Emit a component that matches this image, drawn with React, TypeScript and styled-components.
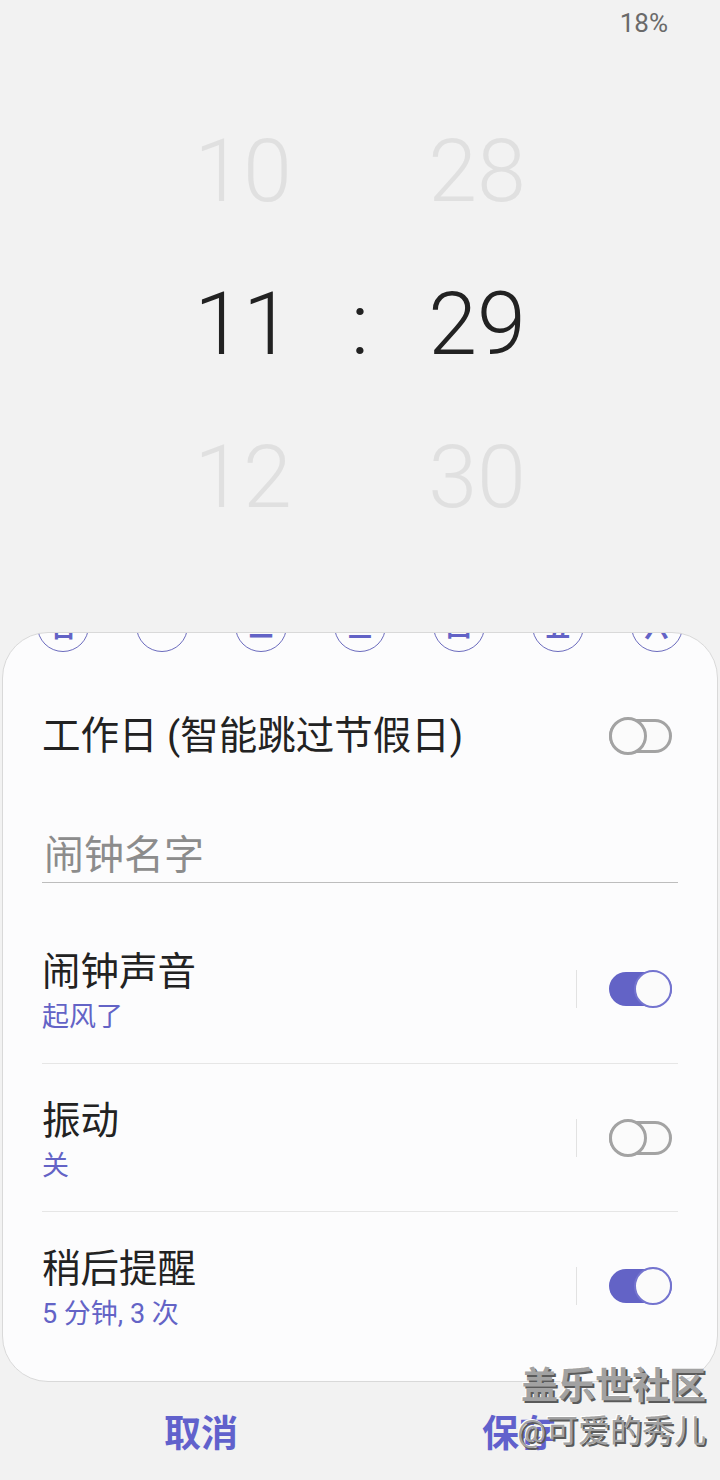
import React from "react";
import styled, { createGlobalStyle } from "styled-components";

const GlobalStyle = createGlobalStyle`
  html, body { margin: 0; padding: 0; background: #f2f2f2; }
  body { font-family: Roboto, "Noto Sans CJK SC", sans-serif; }
  * { box-sizing: border-box; }
`;

const ACCENT = "#6363c6";

const Screen = styled.div`
  width: 720px;
  height: 1480px;
  position: relative;
  background: #f2f2f2;
  overflow: hidden;
  display: flex;
  flex-direction: column;
`;

const StatusBar = styled.div`
  height: 46px;
  display: flex;
  justify-content: flex-end;
  align-items: center;
  padding-right: 52px;
  font-size: 26px;
  color: #6a6a6a;
`;

const Picker = styled.div`
  height: 586px;
  padding-top: 48px;
  display: flex;
  justify-content: center;
`;

const Column = styled.div<{ $w: number }>`
  width: ${(p) => p.$w}px;
  display: flex;
  flex-direction: column;
`;

const Cell = styled.div<{ $active?: boolean }>`
  height: 153px;
  line-height: 153px;
  text-align: center;
  font-size: 88px;
  font-weight: 300;
  color: ${(p) => (p.$active ? "#222222" : "#e0e0e0")};
`;

const Card = styled.div`
  margin: 0 2px;
  height: 750px;
  border: 1px solid #d9d9d9;
  border-radius: 46px;
  background: #fcfcfd;
  overflow: hidden;
  padding: 0 39px;
`;

const DayRow = styled.div`
  display: grid;
  grid-template-columns: repeat(7, 1fr);
  margin: -33px -28px 0;
  justify-items: center;
`;

const DayCircle = styled.div`
  width: 52px;
  height: 52px;
  border-radius: 50%;
  border: 1.3px solid #6b6bbd;
  display: flex;
  align-items: center;
  justify-content: center;
  font-size: 25px;
  font-weight: 700;
  color: ${ACCENT};
`;

const WorkdayRow = styled.div`
  margin-top: 34px;
  height: 100px;
  display: flex;
  align-items: center;
  justify-content: space-between;
`;

const Title = styled.div`
  font-size: 38.5px;
  line-height: 46px;
  color: #222222;
`;

const NameField = styled.div`
  margin-top: 40px;
  height: 57px;
  border-bottom: 1px solid #bdbdbd;
  display: flex;
  align-items: center;
  padding: 0 0 4px 2px;
  font-size: 40px;
  color: #8c8c8c;
`;

const List = styled.div`
  margin-top: 32px;
`;

const Row = styled.div<{ $divider?: boolean }>`
  height: 148px;
  display: flex;
  align-items: center;
  border-top: ${(p) => (p.$divider ? "1px solid #e6e6e6" : "none")};
`;

const TextCol = styled.div`
  flex: 1;
  display: flex;
  flex-direction: column;
  gap: 4px;
  padding-top: 6px;
`;

const Sub = styled.div`
  font-size: 27px;
  line-height: 36px;
  color: ${ACCENT};
`;

const VDivider = styled.div`
  width: 1px;
  height: 38px;
  background: #e2e2e2;
  margin-right: 32px;
`;

const SwitchBox = styled.div`
  position: relative;
  width: 63px;
  height: 38px;
  margin-right: 6px;
`;

const Track = styled.div<{ $on: boolean }>`
  position: absolute;
  left: 0;
  right: 0;
  top: 2px;
  bottom: 2px;
  border-radius: 17px;
  background: ${(p) => (p.$on ? ACCENT : "#fafafa")};
  border: ${(p) => (p.$on ? "none" : "3px solid #a3a3a3")};
`;

const Thumb = styled.div<{ $on: boolean }>`
  position: absolute;
  top: 0;
  ${(p) => (p.$on ? "right: 0;" : "left: 0;")}
  width: 38px;
  height: 38px;
  border-radius: 50%;
  background: #fbfbfb;
  border: ${(p) => (p.$on ? "2px solid #7474cf" : "3px solid #a3a3a3")};
`;

const Switch = ({ on }: { on: boolean }) => (
  <SwitchBox>
    <Track $on={on} />
    <Thumb $on={on} />
  </SwitchBox>
);

const BottomBar = styled.div`
  flex: 1;
  display: flex;
  align-items: center;
  padding: 0 42px;
`;

const ActionButton = styled.button`
  flex: 1;
  background: none;
  border: none;
  padding: 0;
  font-family: Roboto, "Noto Sans CJK SC", sans-serif;
  font-size: 37px;
  font-weight: 700;
  color: #6161cc;
  text-align: center;
`;

const Watermark = styled.div`
  position: absolute;
  right: 14px;
  top: 1364px;
  text-align: right;
  color: #a2a2a2;
  text-shadow: 2px 2px 0 #5a5a5a, -1px -1px 0 #ffffff;
  pointer-events: none;
`;

const WmLine = styled.div<{ $size: number; $lh: number; $bold?: boolean }>`
  font-size: ${(p) => p.$size}px;
  line-height: ${(p) => p.$lh}px;
  font-weight: ${(p) => (p.$bold ? 700 : 400)};
`;

const days = ["日", "一", "二", "三", "四", "五", "六"];

const rows = [
  { title: "闹钟声音", sub: "起风了", on: true },
  { title: "振动", sub: "关", on: false },
  { title: "稍后提醒", sub: "5 分钟, 3 次", on: true },
];

export default function App() {
  return (
    <>
      <GlobalStyle />
      <Screen>
        <StatusBar>18%</StatusBar>
        <Picker>
          <Column $w={140}>
            <Cell>10</Cell>
            <Cell $active>11</Cell>
            <Cell>12</Cell>
          </Column>
          <Column $w={94}>
            <Cell />
            <Cell $active>:</Cell>
            <Cell />
          </Column>
          <Column $w={140}>
            <Cell>28</Cell>
            <Cell $active>29</Cell>
            <Cell>30</Cell>
          </Column>
        </Picker>
        <Card>
          <DayRow>
            {days.map((d) => (
              <DayCircle key={d}>{d}</DayCircle>
            ))}
          </DayRow>
          <WorkdayRow>
            <Title>工作日 (智能跳过节假日)</Title>
            <Switch on={false} />
          </WorkdayRow>
          <NameField>闹钟名字</NameField>
          <List>
            {rows.map((r, i) => (
              <Row key={r.title} $divider={i > 0}>
                <TextCol>
                  <Title>{r.title}</Title>
                  <Sub>{r.sub}</Sub>
                </TextCol>
                <VDivider />
                <Switch on={r.on} />
              </Row>
            ))}
          </List>
        </Card>
        <BottomBar>
          <ActionButton>取消</ActionButton>
          <ActionButton>保存</ActionButton>
        </BottomBar>
        <Watermark>
          <WmLine $size={37} $lh={46} $bold>盖乐世社区</WmLine>
          <WmLine $size={32} $lh={42}>@可爱的秀儿</WmLine>
        </Watermark>
      </Screen>
    </>
  );
}
